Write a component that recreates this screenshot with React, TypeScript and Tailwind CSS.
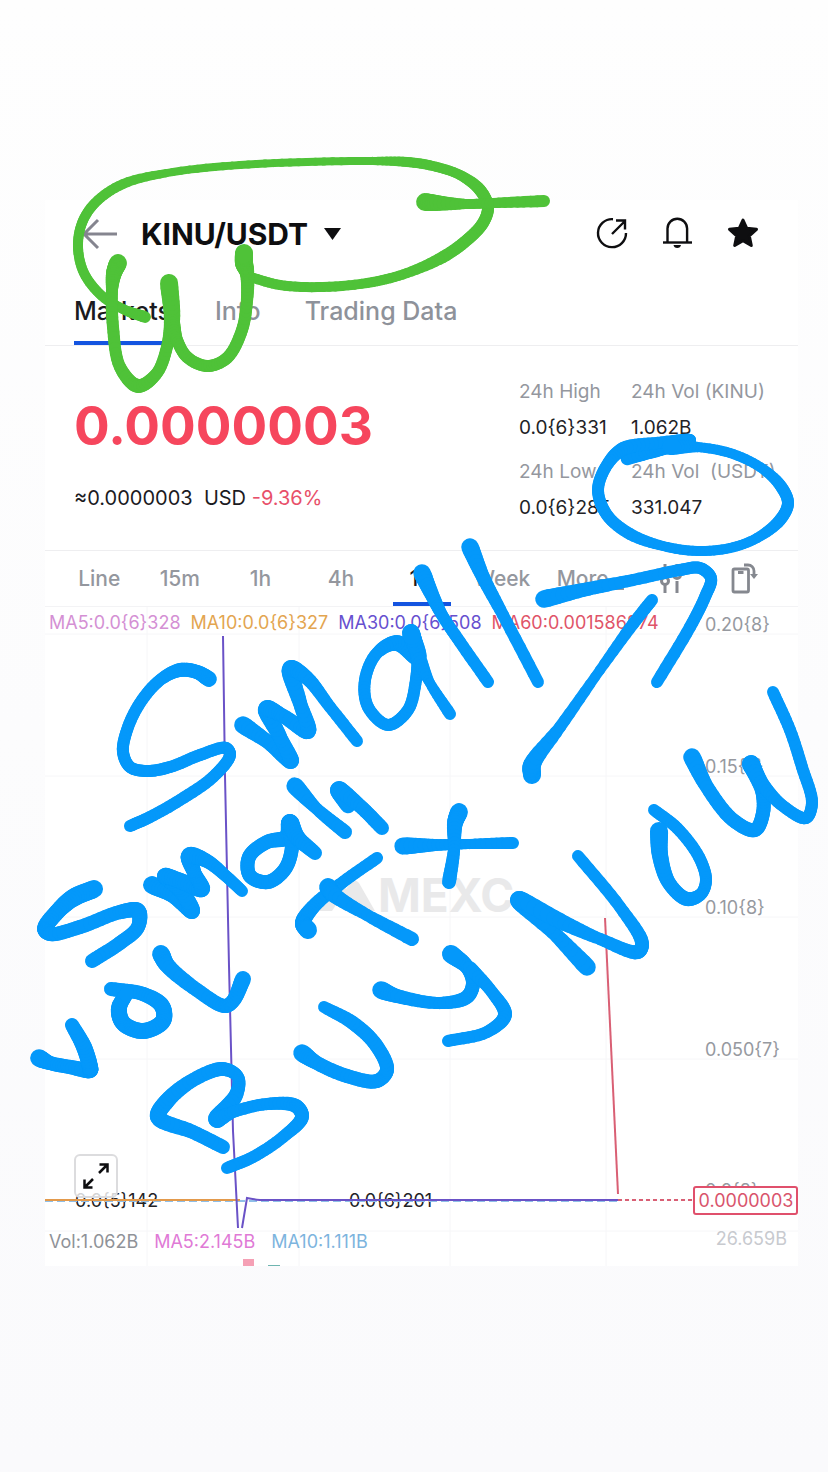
import { useState } from 'react';

// x, y, radius of the pen at that point
type PenPoint = [number, number, number];

const greenInk: PenPoint[][] = [
  // loop round the pair name
  [[145, 317, 6], [125, 310, 5], [102, 296, 5], [84, 273, 5], [78, 247, 5], [82, 223, 5], [95, 203, 5], [123, 184, 5], [173, 172, 4], [240, 165, 4], [307, 162, 4], [373, 161, 4], [407, 162, 5], [433, 166, 5], [460, 175, 5], [480, 190, 6], [488, 207, 6], [483, 223, 6], [467, 240, 6], [443, 257, 6], [407, 273, 5], [373, 282, 5], [323, 287, 5], [280, 285, 5], [250, 277, 5]],
  [[425, 202, 9], [437, 203, 8], [467, 204, 5], [493, 203, 5], [544, 201, 6]],
  [[118, 263, 9], [114, 273, 8], [112, 290, 6], [113, 327, 6], [120, 367, 6], [138, 386, 7], [157, 373, 6], [168, 343, 6], [172, 320, 8], [169, 283, 9]],
  [[172, 322, 8], [177, 340, 6], [187, 357, 6], [207, 366, 6], [227, 358, 6], [242, 330, 6], [247, 300, 6], [247, 273, 7], [244, 263, 9], [244, 253, 9]],
];

const blueInk: PenPoint[][] = [
  // ring round the USDT volume
  [[627, 459, 6], [657, 449, 8], [683, 443, 7], [690, 440, 6], [657, 443, 6], [623, 449, 7], [607, 465, 6], [598, 490, 6], [607, 515, 6], [630, 534, 6], [663, 546, 5], [697, 551, 5], [730, 548, 5], [757, 538, 5], [780, 520, 6], [788, 503, 6], [780, 485, 6], [760, 467, 5], [730, 453, 5], [697, 447, 5], [670, 447, 8]],
  // first line
  [[209, 679, 8], [197, 672, 7], [180, 670, 7], [160, 680, 6], [140, 703, 6], [127, 730, 6], [123, 752, 6], [130, 767, 6], [147, 771, 6], [170, 767, 6], [200, 755, 6], [226, 748, 6], [230, 755, 6], [213, 777, 6], [180, 800, 6], [150, 817, 6], [130, 826, 6]],
  [[243, 725, 9], [268, 742, 7], [291, 761, 8], [280, 737, 7], [267, 709, 9], [283, 716, 7], [308, 731, 8], [300, 703, 7], [291, 669, 9], [307, 678, 7], [330, 707, 6], [357, 741, 6]],
  [[411, 633, 9], [418, 658, 8], [397, 643, 8], [377, 653, 6], [365, 680, 6], [368, 707, 6], [388, 725, 6], [408, 710, 6], [416, 680, 6], [418, 657, 7], [411, 633, 9]],
  [[419, 660, 8], [430, 683, 5], [450, 714, 6]],
  [[422, 573, 9], [433, 597, 7], [442, 615, 6], [460, 642, 6], [488, 682, 6]],
  [[470, 547, 9], [483, 577, 7], [503, 615, 6], [538, 682, 6]],
  // arrow
  [[544, 599, 9], [583, 590, 7], [633, 580, 6], [680, 570, 6], [700, 568, 6], [711, 578, 6], [705, 597, 6], [690, 627, 6], [657, 682, 6]],
  [[532, 775, 9], [532, 765, 9], [560, 727, 6], [600, 670, 5], [633, 624, 6], [652, 600, 6]],
  // second line
  [[94, 889, 9], [73, 898, 9], [57, 912, 8], [45, 929, 8], [50, 934, 7], [80, 927, 7], [120, 912, 7], [138, 911, 8], [138, 927, 7], [120, 943, 7], [92, 961, 7]],
  [[152, 885, 9], [173, 895, 8], [192, 911, 8], [180, 889, 8], [165, 876, 8], [183, 882, 8], [202, 889, 8], [194, 872, 7], [190, 856, 9], [207, 861, 7], [227, 877, 6], [242, 891, 6]],
  [[290, 823, 9], [287, 837, 8], [267, 842, 7], [249, 857, 7], [250, 876, 7], [268, 882, 7], [285, 869, 7], [292, 847, 7], [290, 823, 9], [297, 837, 8], [315, 853, 7]],
  [[295, 786, 9], [317, 809, 6], [345, 832, 7]],
  [[348, 805, 8], [339, 790, 9], [360, 806, 7], [382, 828, 7]],
  [[403, 846, 9], [437, 845, 6], [470, 844, 5], [513, 843, 6]],
  [[459, 812, 9], [455, 823, 8], [454, 850, 6], [449, 882, 7]],
  [[377, 858, 6], [343, 882, 6], [313, 907, 7], [303, 923, 8], [308, 930, 9]],
  [[328, 887, 9], [333, 894, 8], [367, 915, 6], [412, 939, 7]],
  // third line
  [[39, 1058, 9], [50, 1063, 7], [70, 1067, 7], [90, 1070, 8], [90, 1067, 8], [84, 1047, 8], [72, 1025, 7]],
  [[111, 989, 7], [143, 994, 7], [162, 1006, 8], [163, 1021, 8], [143, 1031, 8], [123, 1023, 8], [119, 1008, 8], [127, 993, 7]],
  [[161, 954, 9], [167, 965, 8], [197, 990, 7], [225, 1006, 7], [233, 1001, 7], [243, 979, 8]],
  [[223, 1147, 7], [193, 1132, 7], [158, 1117, 8], [167, 1101, 8], [193, 1080, 7], [223, 1069, 7], [238, 1077, 6], [236, 1095, 7], [217, 1119, 9], [233, 1112, 6], [267, 1104, 6], [296, 1106, 7], [302, 1117, 7], [283, 1137, 6], [253, 1157, 6], [227, 1168, 6]],
  [[302, 1053, 9], [317, 1063, 7], [347, 1076, 7], [377, 1081, 7], [387, 1070, 7], [376, 1045, 7], [353, 1023, 7], [324, 1007, 6]],
  [[381, 990, 9], [397, 996, 7], [440, 1003, 6], [467, 997, 7], [473, 983, 7], [467, 967, 7], [451, 954, 9]],
  [[470, 968, 7], [492, 992, 6], [505, 1015, 7], [487, 1032, 6], [448, 1041, 6]],
  [[587, 967, 9], [553, 932, 7], [519, 900, 9], [560, 921, 8], [600, 939, 6], [638, 952, 7], [642, 943, 7], [620, 907, 6], [578, 856, 6]],
  [[654, 810, 6], [677, 828, 6], [699, 857, 6], [706, 880, 6], [701, 894, 6], [687, 899, 7], [669, 883, 7], [660, 855, 8], [659, 831, 9]],
  [[692, 757, 9], [707, 787, 7], [733, 820, 7], [755, 830, 7], [763, 813, 7], [762, 790, 7], [751, 764, 9], [763, 785, 7], [783, 806, 6], [806, 818, 6], [812, 803, 6], [802, 767, 6], [790, 730, 6], [773, 692, 6]],
];

// Smooths a stroke through its points and cuts it in short pieces of changing width
function smooth(points: PenPoint[], steps = 8): PenPoint[] {
  const out: PenPoint[] = [];
  for (let i = 0; i < points.length - 1; i++) {
    const p0 = points[Math.max(i - 1, 0)];
    const p1 = points[i];
    const p2 = points[i + 1];
    const p3 = points[Math.min(i + 2, points.length - 1)];
    // centripetal spacing keeps tight turns from overshooting
    const gap = (a: PenPoint, b: PenPoint) => Math.max(Math.sqrt(Math.hypot(b[0] - a[0], b[1] - a[1])), 0.01);
    const d1 = gap(p0, p1);
    const d2 = gap(p1, p2);
    const d3 = gap(p2, p3);
    const tangent = (axis: 0 | 1, end: boolean) =>
      end
        ? i + 2 > points.length - 1
          ? p2[axis] - p1[axis]
          : d2 * ((p2[axis] - p1[axis]) / d2 - (p3[axis] - p1[axis]) / (d2 + d3) + (p3[axis] - p2[axis]) / d3)
        : i === 0
          ? p2[axis] - p1[axis]
          : d2 * ((p1[axis] - p0[axis]) / d1 - (p2[axis] - p0[axis]) / (d1 + d2) + (p2[axis] - p1[axis]) / d2);
    const at = (axis: 0 | 1, t: number) => {
      const t2 = t * t;
      const t3 = t2 * t;
      return (
        (2 * t3 - 3 * t2 + 1) * p1[axis] +
        (t3 - 2 * t2 + t) * tangent(axis, false) +
        (-2 * t3 + 3 * t2) * p2[axis] +
        (t3 - t2) * tangent(axis, true)
      );
    };
    for (let s = 0; s < steps; s++) {
      const t = s / steps;
      out.push([at(0, t), at(1, t), p1[2] + (p2[2] - p1[2]) * t]);
    }
  }
  out.push(points[points.length - 1]);
  return out;
}

const Ink = ({ strokes, color }: { strokes: PenPoint[][]; color: string }) => (
  <g stroke={color} strokeLinecap="round">
    {strokes.map((stroke, i) => {
      const pts = smooth(stroke);
      return pts.slice(1).map((p, j) => (
        <line key={`${i}-${j}`} x1={pts[j][0]} y1={pts[j][1]} x2={p[0]} y2={p[1]} strokeWidth={p[2] * 2} />
      ));
    })}
  </g>
);

const stats = [
  { label: '24h High', value: '0.0{6}331' },
  { label: '24h Vol (KINU)', value: '1.062B' },
  { label: '24h Low', value: '0.0{6}285' },
  { label: '24h Vol  (USDT)', value: '331.047' },
];

const averages = [
  { text: 'MA5:0.0{6}328', color: 'text-[#d490d4]' },
  { text: 'MA10:0.0{6}327', color: 'text-[#e3a550]' },
  { text: 'MA30:0.0{6}508', color: 'text-[#6750cf]' },
  { text: 'MA60:0.001586874', color: 'text-[#df5468]' },
];

const axis = [
  { y: 633, label: '0.20{8}' },
  { y: 775, label: '0.15{7}' },
  { y: 916, label: '0.10{8}' },
  { y: 1058, label: '0.050{7}' },
  { y: 1199, label: '0.0{8}' },
];

const Header = () => (
  <header className="flex items-center justify-between pr-[38px] pl-9">
    <div className="flex items-center gap-5">
      <button aria-label="Back">
        <svg width="40" height="32" viewBox="0 0 40 32" fill="none" stroke="#85858f" strokeWidth="3">
          <path d="M17 2 3 16l14 14M3 16h33" />
        </svg>
      </button>
      <button className="flex items-center gap-4 text-[30px] leading-9 font-bold text-[#0e0e10]">
        KINU/USDT
        <svg width="17" height="12" viewBox="0 0 17 12" fill="#0e0e10">
          <path d="M0 0h17L8.500 12z" />
        </svg>
      </button>
    </div>
    <div className="flex items-center gap-8">
      <button aria-label="Share">
        <svg width="34" height="34" viewBox="0 0 34 34" fill="none" stroke="#0e0e10" strokeWidth="2.400">
          <path d="M19 2.200A14 14 0 1 0 32 16" />
          <path d="M18 17 30.500 4.500M22 3.500h9v9" />
        </svg>
      </button>
      <button aria-label="Alerts">
        <svg width="34" height="34" viewBox="0 0 34 34" fill="none" stroke="#0e0e10" strokeWidth="2.400">
          <path d="M7.500 25V11.500a9.800 9.800 0 0 1 19.600 0V25" />
          <path d="M3 25.500h29" />
          <path d="M13.500 28h7.500a3.800 3.500 0 0 1-7.500 0z" fill="#0e0e10" stroke="none" />
        </svg>
      </button>
      <button aria-label="Favourite">
        <svg width="34" height="34" viewBox="0 0 34 34" fill="#0e0e10" stroke="#0e0e10" strokeWidth="3" strokeLinejoin="round">
          <path d="m17 3 3.800 8.300 9.700 1-7.200 6.500 2 9.700L17 23.800l-8.300 4.700 2-9.700-7.200-6.500 9.700-1z" />
        </svg>
      </button>
    </div>
  </header>
);

const Tabs = () => {
  const [active, setActive] = useState('Markets');
  return (
    <nav className="mt-8 flex gap-11 border-b border-[#eeeef0] pl-[29px]">
      {['Markets', 'Info', 'Trading Data'].map(tab => (
        <button
          key={tab}
          onClick={() => setActive(tab)}
          className={`border-b-4 pt-[11px] pb-[14px] text-[25px] leading-8 font-medium ${
            tab === active ? 'border-[#1454e0] text-[#1b1b1f]' : 'border-transparent text-[#8e929a]'
          }`}
        >
          {tab}
        </button>
      ))}
    </nav>
  );
};

const Summary = () => (
  <section className="flex justify-between border-b border-[#eeeef0] pt-[30px] pr-[23px] pb-[14px] pl-[29px]">
    <div>
      <p className="mt-[14px] text-[53px] leading-[72px] font-bold text-[#f6465d]">0.0000003</p>
      <p className="mt-5 text-xl leading-8 text-[#1b1b1f]">
        ≈0.0000003&nbsp; USD <span className="text-[#e8506a]">-9.36%</span>
      </p>
    </div>
    <dl className="grid grid-cols-[112px_144px] whitespace-pre">
      {stats.map(stat => (
        <div key={stat.label} className="h-20">
          <dt className="text-[19px] leading-8 text-[#94979e]">{stat.label}</dt>
          <dd className="text-[19px] leading-10 text-[#222226]">{stat.value}</dd>
        </div>
      ))}
    </dl>
  </section>
);

const Intervals = () => {
  const [active, setActive] = useState('1D');
  return (
    <div className="flex h-14 items-stretch border-b border-[#f3f3f5] px-[14px] text-[21px] font-medium text-[#94979e]">
      {['Line', '15m', '1h', '4h', '1D', 'Week', 'More'].map(name => (
        <button key={name} onClick={() => setActive(name)} className="flex flex-1 justify-center">
          <span
            className={`relative flex h-full w-[58px] items-center justify-center border-b-4 pt-1 ${
              name === active ? 'border-[#1454e0] text-[#1b1b1f]' : 'border-transparent'
            }`}
          >
            {name}
            {name === 'More' && (
              <svg className="absolute right-0 bottom-3 translate-x-3" width="9" height="9" viewBox="0 0 9 9" fill="#94979e">
                <path d="M9 0v9H0z" />
              </svg>
            )}
          </span>
        </button>
      ))}
      <button aria-label="Indicators" className="flex flex-1 items-center justify-center">
        <svg width="44" height="32" viewBox="-16 0 44 32" fill="none" stroke="#85888f" strokeWidth="3">
          <path d="M8 1v14M8 22v8M20 1v6M20 18v12" />
          <circle cx="8" cy="18" r="3.500" />
          <circle cx="20" cy="12" r="3.500" />
        </svg>
      </button>
      <button aria-label="Rotate" className="flex flex-1 items-center justify-center">
        <svg width="28" height="32" viewBox="0 0 28 32" fill="none" stroke="#85888f" strokeWidth="2.800">
          <rect x="3" y="6" width="15.500" height="23" rx="1.500" />
          <path d="M8 9.500h5.500M14 2h4a6 6 0 0 1 6 6v5" />
          <path d="M20 11h8l-4 5z" fill="#85888f" stroke="none" />
        </svg>
      </button>
    </div>
  );
};

const Chart = () => (
  <section className="grid">
    <svg viewBox="45 606 753 659" className="col-start-1 row-start-1 h-auto w-full" fontFamily="Inter, sans-serif">
      <g stroke="#f6f6f8" strokeWidth="1">
        {axis.map(line => (
          <path key={line.y} d={`M45 ${line.y}H798`} />
        ))}
        <path d="M45 1230H798M147 606V1265M299 606V1265M450 606V1265M606 606V1265" />
      </g>

      {/* watermark */}
      <g fill="#e9e9ea">
        <path d="M316 910 334 882q4-5 8 0l4 6 5-6q4-5 8 0l16 28h-20l-12-17-11 17z" />
        <text x="378" y="911" fontSize="46" fontWeight="700">MEXC</text>
      </g>

      <g fill="#96999f" fontSize="18">
        {axis.map(line => (
          <text key={line.y} x="705" y={line.y - 3}>{line.label}</text>
        ))}
        <text x="787" y="1244" textAnchor="end" fill="#c8cacf">26.659B</text>
      </g>

      <g fill="#222226" fontSize="18">
        <text x="75" y="1206">0.0{'{5}'}142</text>
        <text x="349" y="1206">0.0{'{6}'}201</text>
      </g>

      <g fill="none" strokeWidth="2">
        <path d="M45 1200H618" stroke="#8fbfe8" strokeDasharray="8 4" />
        <path d="M45 1199H240" stroke="#e39a4c" />
        <path d="m223 635 2 140 4 190 4 165 5 97M242 1227l5-30q5 1 13 2h358" stroke="#6a52c7" />
        <path d="m605 917 13 276" stroke="#d95f74" />
        <path d="M618 1199h76" stroke="#d95f74" strokeDasharray="4 3" />
      </g>

      <rect x="694" y="1186" width="103" height="27" rx="2" fill="#fff" stroke="#e0506c" strokeWidth="2" />
      <text x="746" y="1206" textAnchor="middle" fontSize="18" fill="#d9546c">0.0000003</text>

      <path d="M243 1258h11v7h-11z" fill="#f5a0b5" />
      <path d="M268 1264h12v1h-12z" fill="#6fb5b0" />
    </svg>

    <div className="col-start-1 row-start-1 flex gap-[10px] self-start pt-1 pl-1 text-[18px] leading-6 whitespace-nowrap">
      {averages.map(avg => (
        <span key={avg.text} className={avg.color}>{avg.text}</span>
      ))}
    </div>

    <div className="col-start-1 row-start-1 flex flex-col items-start self-end">
      <button aria-label="Expand chart" className="ml-[29px] flex size-11 items-center justify-center rounded-md border-2 border-[#dcdcde] bg-white/80">
        <svg width="28" height="28" viewBox="0 0 28 28" fill="none" stroke="#0e0e10" strokeWidth="2.500">
          <path d="m17 11 8-8M17.500 2.500h8v8M11 17l-8 8M2.500 17.500v8h8" />
        </svg>
      </button>
      <div className="mt-8 mb-3 flex gap-4 pl-1 text-[18px] leading-6 whitespace-nowrap">
        <span className="text-[#8f9298]">Vol:1.062B</span>
        <span className="text-[#e07ad6]">MA5:2.145B</span>
        <span className="text-[#7db4de]">MA10:1.111B</span>
      </div>
    </div>
  </section>
);

export default function App() {
  return (
    <div className="relative min-h-screen overflow-hidden bg-linear-to-b from-[#fefefe] to-[#fafafc] pt-[200px] pr-[30px] pl-[45px] font-[Inter,sans-serif]">
      <main className="bg-white pt-4">
        <Header />
        <Tabs />
        <Summary />
        <Intervals />
        <Chart />
      </main>

      {/* hand-drawn notes over the page */}
      <svg viewBox="0 0 828 1472" className="pointer-events-none absolute inset-x-0 top-0 w-full" aria-hidden="true">
        <Ink strokes={greenInk} color="#4fc238" />
        <Ink strokes={blueInk} color="#0498fa" />
      </svg>
    </div>
  );
}
